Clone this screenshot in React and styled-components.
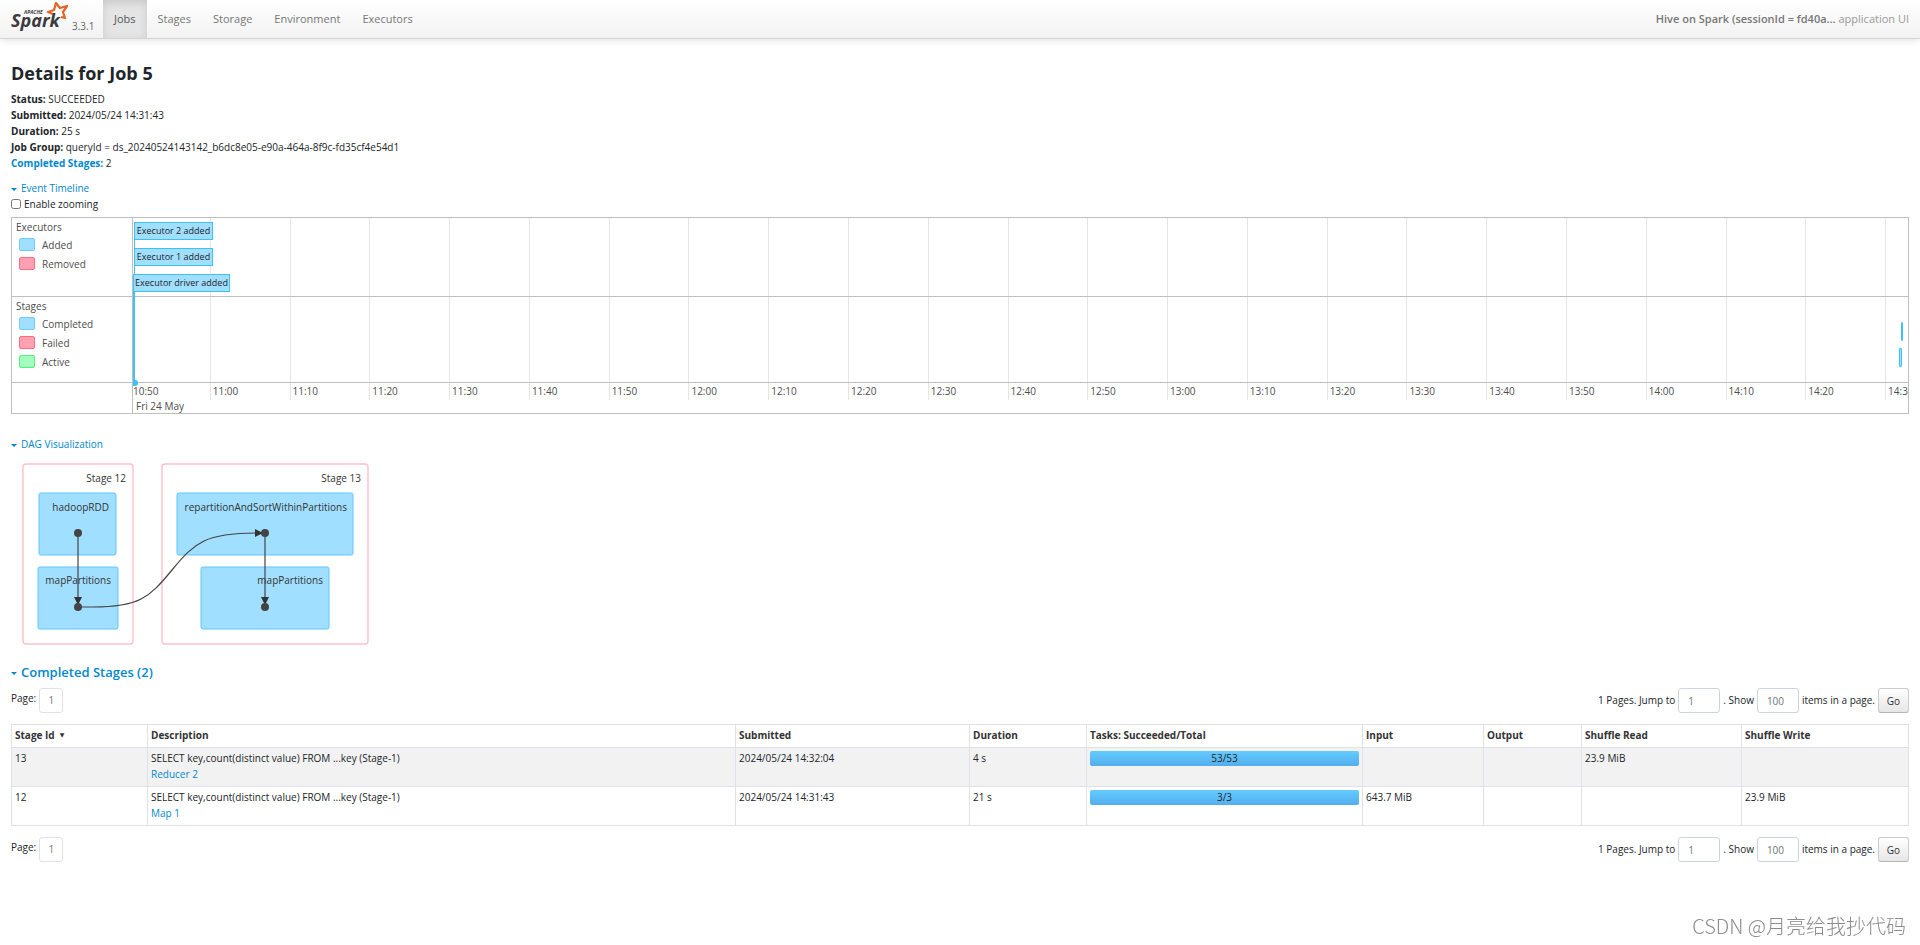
import React from "react";
import styled, { createGlobalStyle } from "styled-components";

const GlobalStyle = createGlobalStyle`
  *, *::before, *::after { box-sizing: border-box; }
  body {
    margin: 0;
    background: #fff;
    color: #212529;
    font-family: "Open Sans", "Noto Sans", "Noto Sans CJK SC", sans-serif;
    font-size: 10px;
    line-height: 16px;
  }
  a { color: #0088cc; text-decoration: none; }
  h3, h4, ul { margin: 0; padding: 0; }
  button, input { font: inherit; }
`;

const Navbar = styled.nav`
  display: flex;
  height: 39px;
  padding-left: 11px;
  border-bottom: 1px solid #d4d4d4;
  background: linear-gradient(#ffffff, #f2f2f2);
  box-shadow: 0 1px 8px rgba(0, 0, 0, 0.12);
  font-size: 11px;
`;

const Brand = styled.a`
  display: flex;
  width: 92px;
  color: #666;
`;

const Version = styled.span`
  padding: 18px 0 0 4px;
  font-size: 10px;
`;

const NavList = styled.ul`
  display: flex;
  flex: 1;
  list-style: none;
`;

const NavLink = styled.a`
  display: block;
  height: 38px;
  padding: 11px 11px;
  color: ${(p) => (p.$active ? "#555" : "#777")};
  background: ${(p) => (p.$active ? "#e5e5e5" : "transparent")};
  box-shadow: ${(p) => (p.$active ? "inset 0 3px 8px rgba(0, 0, 0, 0.125)" : "none")};
`;

const AppName = styled.div`
  padding: 11px 11px 0 0;
  color: #999;
  strong { color: #777; font-weight: 600; }
`;

const Page = styled.main`
  padding: 23px 11px 0 11px;
`;

const Title = styled.h3`
  font-size: 18px;
  font-weight: 700;
  line-height: 22px;
`;

const Summary = styled.ul`
  margin-top: 7px;
  list-style: none;
  strong { font-weight: 700; }
`;

const Toggle = styled.button`
  display: flex;
  align-items: center;
  gap: 4px;
  margin: ${(p) => p.$top}px 0 0;
  padding: 0;
  border: 0;
  background: none;
  color: #0088cc;
  font-size: ${(p) => (p.$large ? 13 : 10)}px;
  font-weight: ${(p) => (p.$large ? 600 : 400)};
  line-height: ${(p) => (p.$large ? 18 : 16)}px;
  &::before {
    content: "";
    margin-top: 3px;
    border: 3px solid transparent;
    border-top-color: #0088cc;
    border-bottom: 0;
  }
`;

const ZoomOption = styled.label`
  display: flex;
  align-items: center;
  gap: 3px;
  input { width: 10px; height: 10px; margin: 0; }
`;

const Timeline = styled.section`
  display: grid;
  grid-template-columns: 120px 1fr;
  grid-template-rows: 78px 85px 30px;
  gap: 1px;
  margin-top: 5px;
  border: 1px solid #bfbfbf;
  background: #bfbfbf;
  color: #4d4d4d;
  > * { background-color: #fff; }
`;

const Group = styled.div`
  padding: 1px 4px;
`;

const Legend = styled.div`
  display: flex;
  align-items: center;
  gap: 7px;
  height: 19px;
  padding-left: 3px;
  &::before {
    content: "";
    width: 16px;
    height: 13px;
    border: 1px solid ${(p) => p.$line};
    border-radius: 2px;
    background: ${(p) => p.$fill};
  }
`;

const Lane = styled.div`
  position: relative;
  display: grid;
  grid-template-columns: 77fr repeat(21, 80fr) 23fr;
`;

const AxisLane = styled(Lane)`
  overflow: hidden;
  grid-template-rows: 17px 13px;
`;

const Tick = styled.span`
  min-width: 0;
  border-left: ${(p) => (p.$first ? 0 : 1)}px solid #e5e5e5;
  padding-left: ${(p) => (p.$first ? 0 : 2)}px;
  line-height: 16px;
  white-space: nowrap;
`;

const DayLabel = styled.span`
  grid-column: 1 / -1;
  padding-left: 3px;
  line-height: 12px;
`;

const EventBox = styled.div`
  position: absolute;
  z-index: 2;
  left: ${(p) => p.$left}px;
  top: ${(p) => p.$top}px;
  width: ${(p) => p.$width}px;
  height: 18px;
  border: 1px solid #3ebfff;
  background: #a0dfff;
  color: #212529;
  font-size: 9px;
  line-height: 16px;
  text-align: center;
  white-space: nowrap;
`;

const Stem = styled.div`
  position: absolute;
  z-index: 1;
  left: ${(p) => p.$left}px;
  top: ${(p) => p.$top}px;
  width: ${(p) => p.$width}px;
  height: ${(p) => p.$height}px;
  background: #3ebfff;
`;

const AxisDot = styled.div`
  position: absolute;
  z-index: 2;
  left: 0;
  bottom: -4px;
  width: 5px;
  height: 6px;
  border-radius: 0 3px 3px 0;
  background: #3ebfff;
`;

const StageBar = styled.div`
  position: absolute;
  right: ${(p) => p.$right}px;
  top: ${(p) => p.$top}px;
  width: ${(p) => p.$width}px;
  height: 19px;
  border: 1px solid #3ebfff;
  border-radius: 1px;
  background: #a0dfff;
`;

const Dag = styled.svg`
  display: block;
  margin: 3px 0 16px;
  font-size: 10px;
  fill: #333;
`;

const Pager = styled.div`
  display: flex;
  justify-content: space-between;
  height: 25px;
  margin: ${(p) => p.$top}px 0 11px;
`;

const PageList = styled.div`
  display: flex;
  gap: 3px;
  line-height: 20px;
`;

const PageNumber = styled.a`
  width: 24px;
  height: 25px;
  border: 1px solid #dee2e6;
  border-radius: 3px;
  color: #777;
  line-height: 23px;
  text-align: center;
`;

const JumpForm = styled.form`
  display: flex;
  gap: 3px;
  line-height: 24px;
`;

const SmallInput = styled.input`
  width: 42px;
  height: 25px;
  padding: 0 9px;
  border: 1px solid #ced4da;
  border-radius: 3px;
  background: #fff;
  color: #6c757d;
`;

const GoButton = styled.button`
  width: 31px;
  height: 25px;
  padding: 0;
  border: 1px solid #ccc;
  border-bottom-color: #b3b3b3;
  border-radius: 3px;
  background: linear-gradient(#ffffff, #e6e6e6);
  color: #333;
`;

const StageTable = styled.table`
  width: 100%;
  table-layout: fixed;
  border-collapse: collapse;
  th, td {
    padding: 2px 3px;
    border: 1px solid #dee2e6;
    text-align: left;
    vertical-align: top;
  }
  th { height: 23px; font-weight: 700; color: #333; }
  td { height: 39px; }
  tbody tr:nth-child(odd) { background: #f2f2f2; }
`;

const SortMark = styled.span`
  margin-left: 5px;
  font-family: "DejaVu Sans", sans-serif;
  font-size: 6px;
  vertical-align: top;
`;

const Progress = styled.div`
  height: 15px;
  margin-top: 1px;
  border-radius: 2px;
  background: linear-gradient(#64cbff, #54aeed);
  line-height: 15px;
  text-align: center;
`;

const Watermark = styled.div`
  position: fixed;
  right: 14px;
  bottom: 5px;
  color: #8c8c8c;
  font-family: "Noto Sans CJK SC", sans-serif;
  font-size: 20px;
  font-weight: 300;
  line-height: 28px;
`;

const BLUE = { $line: "#70caff", $fill: "#a0dfff" };
const RED = { $line: "#ff6b85", $fill: "#ffa1b0" };
const GREEN = { $line: "#55f27b", $fill: "#a2fcc0" };

const TICKS = Array.from({ length: 23 }, (_, i) => {
  const minutes = 650 + i * 10;
  return `${Math.floor(minutes / 60)}:${String(minutes % 60).padStart(2, "0")}`;
});

const COLUMNS = [
  ["Stage Id", 136],
  ["Description", 588],
  ["Submitted", 234],
  ["Duration", 117],
  ["Tasks: Succeeded/Total", 276],
  ["Input", 121],
  ["Output", 98],
  ["Shuffle Read", 160],
  ["Shuffle Write", 167],
];

const STAGES = [
  { id: 13, name: "Reducer 2", submitted: "2024/05/24 14:32:04", duration: "4 s", tasks: "53/53", input: "", read: "23.9 MiB", write: "" },
  { id: 12, name: "Map 1", submitted: "2024/05/24 14:31:43", duration: "21 s", tasks: "3/3", input: "643.7 MiB", read: "", write: "23.9 MiB" },
];

function SparkLogo() {
  return (
    <svg width="57" height="38" viewBox="0 0 57 38" role="img" aria-label="Apache Spark">
      <text x="13" y="14" fontSize="5" fontWeight="700" fontStyle="italic" fill="#3c3a3e">APACHE</text>
      <path
        d="M42 14 L37 12 L43 10 L45 3 L49 8 L56 6 L52 12 L54 18 L50 17"
        fill="none"
        stroke="#e0662a"
        strokeWidth="2.3"
        strokeLinejoin="round"
      />
      <text x="0" y="27" fontSize="18" fontWeight="700" fontStyle="italic" fill="#3c3a3e">Spark</text>
    </svg>
  );
}

function Ticks() {
  return TICKS.map((t, i) => <Tick key={t} $first={i === 0} />);
}

function DagGraph() {
  const clusters = [
    [12, 9, 110, 180],
    [151, 9, 206, 180],
  ];
  const scopes = [
    [28, 38, 77, 62],
    [27, 112, 80, 62],
    [166, 38, 176, 62],
    [190, 112, 128, 62],
  ];
  const dots = [[67, 78], [67, 152], [254, 78], [254, 152]];
  return (
    <Dag width="370" height="192" viewBox="0 0 370 192" role="img" aria-label="DAG Visualization">
      {clusters.map(([x, y, w, h]) => (
        <rect key={x} x={x} y={y} width={w} height={h} rx="3" fill="#fff" stroke="#ffc0cb" strokeWidth="1.4" />
      ))}
      {scopes.map(([x, y, w, h]) => (
        <rect key={`${x}-${y}`} x={x} y={y} width={w} height={h} rx="2" fill="#a0dfff" stroke="#5fc8ff" />
      ))}
      <g textAnchor="end">
        <text x="115" y="27">Stage 12</text>
        <text x="350" y="27">Stage 13</text>
        <text x="98" y="56">hadoopRDD</text>
        <text x="100" y="129">mapPartitions</text>
        <text x="336" y="56">repartitionAndSortWithinPartitions</text>
        <text x="312" y="129">mapPartitions</text>
      </g>
      <g fill="none" stroke="#444" strokeWidth="1.2">
        <path d="M67 78 V146" />
        <path d="M254 78 V146" />
        <path d="M67 152 H82 C128 152 138 143 161 115 S195 78 246 78" />
      </g>
      <g fill="#333">
        <path d="M63 142 h8 l-4 8 z" />
        <path d="M250 142 h8 l-4 8 z" />
        <path d="M244 74 v8 l8 -4 z" />
      </g>
      {dots.map(([x, y]) => (
        <circle key={`${x}-${y}`} cx={x} cy={y} r="4" fill="#444" />
      ))}
    </Dag>
  );
}

function Pagination({ top, name }) {
  return (
    <Pager $top={top}>
      <PageList>
        <span>Page:</span>
        <PageNumber href="#page-1">1</PageNumber>
      </PageList>
      <JumpForm onSubmit={(e) => e.preventDefault()}>
        <label htmlFor={`${name}-page`}>1 Pages. Jump to</label>
        <SmallInput id={`${name}-page`} defaultValue="1" />
        <label htmlFor={`${name}-size`}>. Show</label>
        <SmallInput id={`${name}-size`} defaultValue="100" />
        <span>items in a page.</span>
        <GoButton type="submit">Go</GoButton>
      </JumpForm>
    </Pager>
  );
}

export default function App() {
  return (
    <>
      <GlobalStyle />
      <Navbar>
        <Brand href="#home">
          <SparkLogo />
          <Version>3.3.1</Version>
        </Brand>
        <NavList>
          {["Jobs", "Stages", "Storage", "Environment", "Executors"].map((item) => (
            <li key={item}>
              <NavLink href={`#${item.toLowerCase()}`} $active={item === "Jobs"}>{item}</NavLink>
            </li>
          ))}
        </NavList>
        <AppName>
          <strong>Hive on Spark (sessionId = fd40a...</strong> application UI
        </AppName>
      </Navbar>
      <Page>
        <Title>Details for Job 5</Title>
        <Summary>
          <li><strong>Status:</strong> SUCCEEDED</li>
          <li><strong>Submitted:</strong> 2024/05/24 14:31:43</li>
          <li><strong>Duration:</strong> 25 s</li>
          <li><strong>Job Group:</strong> queryId = ds_20240524143142_b6dc8e05-e90a-464a-8f9c-fd35cf4e54d1</li>
          <li><a href="#completed"><strong>Completed Stages:</strong></a> 2</li>
        </Summary>

        <Toggle type="button" $top={9}>Event Timeline</Toggle>
        <ZoomOption>
          <input type="checkbox" />
          Enable zooming
        </ZoomOption>
        <Timeline>
          <Group>
            Executors
            <Legend {...BLUE}>Added</Legend>
            <Legend {...RED}>Removed</Legend>
          </Group>
          <Lane>
            <Ticks />
            <Stem $left={1} $top={22} $width={1} $height={34} />
            <Stem $left={0} $top={74} $width={2} $height={5} />
            <EventBox $left={1} $top={4} $width={79}>Executor 2 added</EventBox>
            <EventBox $left={1} $top={30} $width={79}>Executor 1 added</EventBox>
            <EventBox $left={0} $top={56} $width={97}>Executor driver added</EventBox>
          </Lane>
          <Group>
            Stages
            <Legend {...BLUE}>Completed</Legend>
            <Legend {...RED}>Failed</Legend>
            <Legend {...GREEN}>Active</Legend>
          </Group>
          <Lane>
            <Ticks />
            <Stem $left={0} $top={-1} $width={2} $height={86} />
            <AxisDot />
            <StageBar $right={5} $top={25} $width={2} />
            <StageBar $right={6} $top={51} $width={3} />
          </Lane>
          <Group />
          <AxisLane>
            {TICKS.map((t, i) => <Tick key={t} $first={i === 0}>{t}</Tick>)}
            <DayLabel>Fri 24 May</DayLabel>
          </AxisLane>
        </Timeline>

        <Toggle type="button" $top={22}>DAG Visualization</Toggle>
        <DagGraph />

        <Toggle type="button" id="completed" $large $top={0}>Completed Stages (2)</Toggle>
        <Pagination top={7} name="top" />
        <StageTable>
          <colgroup>
            {COLUMNS.map(([label, width]) => <col key={label} width={width} />)}
          </colgroup>
          <thead>
            <tr>
              {COLUMNS.map(([label], i) => (
                <th key={label} scope="col">
                  {label}
                  {i === 0 && <SortMark>▼</SortMark>}
                </th>
              ))}
            </tr>
          </thead>
          <tbody>
            {STAGES.map((s) => (
              <tr key={s.id}>
                <td>{s.id}</td>
                <td>
                  SELECT key,count(distinct value) FROM ...key (Stage-1)
                  <br />
                  <a href={`#stage-${s.id}`}>{s.name}</a>
                </td>
                <td>{s.submitted}</td>
                <td>{s.duration}</td>
                <td><Progress>{s.tasks}</Progress></td>
                <td>{s.input}</td>
                <td />
                <td>{s.read}</td>
                <td>{s.write}</td>
              </tr>
            ))}
          </tbody>
        </StageTable>
        <Pagination top={11} name="bottom" />
      </Page>
      <Watermark>CSDN @月亮给我抄代码</Watermark>
    </>
  );
}
